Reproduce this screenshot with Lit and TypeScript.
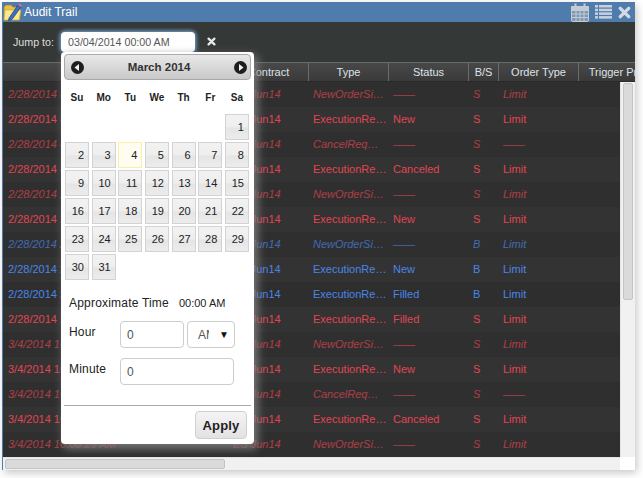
import { css, html, LitElement, svg } from "lit";
import { customElement } from "lit/decorators.js";

type Tone = "red" | "blue";
interface Row {
  date: string;
  type: string;
  status: string;
  side: string;
  order: string;
  tone: Tone;
  muted: boolean;
}

const DASH = "——";
const NEW = "NewOrderSingle";
const EXEC = "ExecutionReport";
const CANCEL = "CancelReq…";

function row(date: string, type: string, status: string, tone: Tone = "red", order = "Limit"): Row {
  return {
    date,
    type,
    status,
    order,
    tone,
    side: tone === "red" ? "S" : "B",
    muted: type !== EXEC,
  };
}

const ROWS: Row[] = [
  row("2/28/2014 8:12:04 PM", NEW, DASH),
  row("2/28/2014 8:12:04 PM", EXEC, "New"),
  row("2/28/2014 8:14:33 PM", CANCEL, DASH, "red", DASH),
  row("2/28/2014 8:14:33 PM", EXEC, "Canceled"),
  row("2/28/2014 2:20:41 PM", NEW, DASH),
  row("2/28/2014 2:20:41 PM", EXEC, "New"),
  row("2/28/2014 2:31:10 PM", NEW, DASH, "blue"),
  row("2/28/2014 2:31:10 PM", EXEC, "New", "blue"),
  row("2/28/2014 2:31:10 PM", EXEC, "Filled", "blue"),
  row("2/28/2014 2:31:10 PM", EXEC, "Filled"),
  row("3/4/2014 10:02:17 AM", NEW, DASH),
  row("3/4/2014 10:02:17 AM", EXEC, "New"),
  row("3/4/2014 10:05:52 AM", CANCEL, DASH, "red", DASH),
  row("3/4/2014 10:05:52 AM", EXEC, "Canceled"),
  row("3/4/2014 10:08:29 AM", NEW, DASH),
];

const WEEKDAYS = ["Su", "Mo", "Tu", "We", "Th", "Fr", "Sa"];
const HEADERS = ["", "Contract", "Type", "Status", "B/S", "Order Type", "Trigger Price"];

const folderIcon = svg`<svg class="logo" width="20" height="20" viewBox="0 0 20 20">
  <path d="M1 5 L3 3 H8 L10 5 H17 V18 H1 Z" fill="#e8c04a" stroke="#a5852c" stroke-width=".8"/>
  <path d="M2 8 H18 L16 18 H1 Z" fill="#fbe98a" stroke="#c9a63a" stroke-width=".6"/>
  <path d="M6 16 L15 3 L18 5 L9 17.5 L5.5 18.5 Z" fill="#3d6fc0" stroke="#1f3f7a" stroke-width=".7"/>
  <path d="M15 3 L16.2 1.4 L19 3.4 L18 5 Z" fill="#e86ca0"/>
</svg>`;

const calendarIcon = svg`<svg width="18" height="19" viewBox="0 0 18 19" fill="none" stroke="#c3ccd4">
  <rect x=".5" y="3.5" width="17" height="15" rx="1.5" stroke="#c3ccd4" fill="#7d98b5"/>
  <path d="M.5 7.5 H17.5 M.5 11 H17.5 M.5 14.5 H17.5 M5 7.5 V18 M9 7.5 V18 M13 7.5 V18"/>
  <path d="M.5 3.5 H17.5 V7 H.5 Z" fill="#c3ccd4"/>
  <path d="M4.5 .5 V5 M13.5 .5 V5" stroke-width="2"/>
</svg>`;

const listIcon = svg`<svg width="17" height="14" viewBox="0 0 17 14" fill="#c9d2da">
  <rect x="0" y="0" width="3" height="2.5"/><rect x="4" y="0" width="13" height="2.5"/>
  <rect x="0" y="3.7" width="3" height="2.5"/><rect x="4" y="3.7" width="13" height="2.5"/>
  <rect x="0" y="7.4" width="3" height="2.5"/><rect x="4" y="7.4" width="13" height="2.5"/>
  <rect x="0" y="11.1" width="3" height="2.5"/><rect x="4" y="11.1" width="13" height="2.5"/>
</svg>`;

const crossIcon = (size: number, color: string) => svg`<svg width=${size} height=${size} viewBox="0 0 14 14">
  <path d="M2.5 2.5 L11.5 11.5 M11.5 2.5 L2.5 11.5" stroke=${color} stroke-width="3.6" stroke-linecap="round"/>
</svg>`;

const arrowIcon = (points: string) => svg`<svg width="13" height="13" viewBox="0 0 13 13">
  <circle cx="6.5" cy="6.5" r="6.5" fill="#1e1e1e"/>
  <polygon points=${points} fill="#f2f2f2"/>
</svg>`;

@customElement("app-root")
export class AppRoot extends LitElement {
  static styles = css`
    :host {
      display: block;
      width: 643px;
      height: 478px;
      overflow: hidden;
      box-sizing: border-box;
      padding: 2px 8px 8px 2px;
      background: #fff;
      font-family: "Liberation Sans", Arial, sans-serif;
      font-size: 11px;
    }
    * {
      box-sizing: border-box;
    }
    .window {
      position: relative;
      display: flex;
      flex-direction: column;
      height: 100%;
      background: #f1f1f1;
      border-left: 1px solid #4f7cac;
      box-shadow: 2px 3px 8px rgba(0, 0, 0, 0.22);
    }
    .title {
      display: flex;
      align-items: center;
      flex: none;
      height: 20px;
      background: #4f7cac;
      color: #fff;
      font-size: 12px;
      padding-right: 4px;
    }
    .logo {
      margin: 0 1px 0 0;
      flex: none;
    }
    .title-name {
      flex: 1;
    }
    .title-tools {
      display: flex;
      align-items: center;
      gap: 6px;
    }
    .toolbar {
      display: flex;
      align-items: center;
      flex: none;
      height: 40px;
      background: #343836;
      color: #ddd;
      font-size: 10.7px;
      padding: 0 0 0 10px;
    }
    .jump-label {
      flex: none;
      width: 40px;
      white-space: nowrap;
    }
    .jump-input {
      flex: none;
      width: 134px;
      height: 20px;
      margin: 0 12px 0 8px;
      padding: 0 7px;
      display: flex;
      align-items: center;
      background: #fff;
      border-radius: 4px;
      color: #555;
      box-shadow: 0 0 4px 1px #7fb2e5;
    }
    .clear {
      display: flex;
      margin-bottom: 2px;
    }
    .grid {
      display: flex;
      flex-direction: column;
      flex: 1;
      min-height: 0;
    }
    .head,
    .cells {
      display: grid;
      grid-template-columns: 225px 80px 80px 80px 30px 80px 83px;
      width: 632px;
    }
    .head {
      flex: none;
      height: 20px;
      overflow: hidden;
      background: linear-gradient(#484848, #3a3a3a);
      border-top: 1px solid #6a6a6a;
      border-bottom: 1px solid #2a2a2a;
      color: #dde3e8;
    }
    .head div {
      display: flex;
      align-items: center;
      justify-content: center;
      white-space: nowrap;
      overflow: hidden;
      border-left: 1px solid #6c6c6c;
    }
    .head div:first-child {
      border-left: 0;
    }
    .body {
      display: flex;
      flex: 1;
      min-height: 0;
    }
    .rows {
      flex: 1;
      min-width: 0;
      overflow: hidden;
      background: #333;
    }
    .cells {
      height: 25px;
      align-items: center;
      background: #333;
      padding-bottom: 2px;
    }
    .cells:nth-child(odd) {
      background: #2e2e2e;
    }
    .cells div {
      padding: 0 0 0 5px;
      white-space: nowrap;
      overflow: hidden;
      text-overflow: ellipsis;
    }
    .red {
      color: #e24552;
    }
    .blue {
      color: #4a86e8;
    }
    .muted {
      font-style: italic;
      opacity: 0.68;
    }
    .vbar {
      flex: none;
      width: 15px;
      padding: 1px 2px;
      background: #f1f1f1;
      border-left: 1px solid #e4e4e4;
    }
    .vthumb {
      height: 217px;
      background: #dadada;
      border: 1px solid #c4c4c4;
      border-radius: 2px;
    }
    .hbar {
      display: flex;
      flex: none;
      height: 13px;
    }
    .htrack {
      flex: 1;
      padding: 1px 2px;
      background: #f1f1f1;
      border-top: 1px solid #e4e4e4;
    }
    .hthumb {
      width: 220px;
      height: 10px;
      background: #dadada;
      border: 1px solid #c4c4c4;
      border-radius: 2px;
    }
    .corner {
      flex: none;
      width: 15px;
      background: #fff;
    }
    .picker {
      position: absolute;
      left: 58px;
      top: 50px;
      width: 193px;
      height: 392px;
      display: flex;
      flex-direction: column;
      padding: 2px 3px;
      background: #fff;
      color: #222;
      border-radius: 4px;
      box-shadow: 3px 4px 8px 1px rgba(125, 125, 125, 0.9);
    }
    .month {
      display: flex;
      align-items: center;
      justify-content: space-between;
      flex: none;
      height: 26px;
      padding: 0 3px 0 6px;
      background: linear-gradient(#e8e8e8, #c9c9c9);
      border: 1px solid #a9a9a9;
      border-radius: 4px;
      color: #333;
      font-weight: bold;
      font-size: 11.5px;
    }
    .month svg {
      display: block;
    }
    .weekday {
      display: flex;
      align-items: center;
      justify-content: center;
      font-weight: bold;
      font-size: 10px;
      color: #222;
    }
    .weekdays {
      flex: none;
      height: 32px;
      display: grid;
      grid-template-columns: repeat(7, 24px);
      column-gap: 2.67px;
      padding: 3px 0 0 1px;
    }
    .days {
      display: grid;
      flex: none;
      grid-template-columns: repeat(7, 24px);
      grid-auto-rows: 26px;
      column-gap: 2.67px;
      row-gap: 2px;
      padding: 2px 0 0 1px;
    }
    .day {
      display: flex;
      align-items: center;
      justify-content: flex-end;
      padding-right: 4px;
      background: linear-gradient(#f2f2f2 0, #eeeeee 50%, #e5e5e5 54%, #ececec 100%);
      border: 1px solid #d3d3d3;
      color: #222;
      font-size: 11px;
    }
    .day.today {
      background: #fffdf2;
      border-color: #fbeea6;
    }
    .approx {
      display: flex;
      align-items: baseline;
      gap: 10px;
      flex: none;
      margin: 16px 0 0 5px;
      font-size: 12px;
      letter-spacing: 0.2px;
      color: #222;
    }
    .approx span + span {
      font-size: 11px;
      letter-spacing: 0;
    }
    .field {
      display: flex;
      flex: none;
      gap: 3px;
      margin: 11px 0 0 5px;
    }
    .field label {
      width: 48px;
      padding-top: 4px;
      font-size: 12px;
      letter-spacing: 0.2px;
      color: #222;
    }
    .field input,
    .ampm {
      height: 27px;
      padding: 0 6px;
      background: #fff;
      border: 1px solid #cdcdcd;
      border-radius: 4px;
      font: 12px "Liberation Sans", Arial, sans-serif;
      color: #555;
      outline: none;
    }
    .hour {
      width: 64px;
    }
    .minute {
      width: 114px;
    }
    .field.second {
      margin-top: 10px;
    }
    .ampm {
      display: flex;
      align-items: center;
      justify-content: space-between;
      width: 48px;
      padding: 0 5px 0 10px;
    }
    .ampm span {
      width: 11px;
      overflow: hidden;
    }
    .ampm i {
      font-style: normal;
      color: #111;
      font-size: 10px;
    }
    .footer {
      display: flex;
      justify-content: flex-end;
      flex: none;
      margin-top: 20px;
      padding: 5px 4px 0 0;
      border-top: 1px solid #aaa;
    }
    .apply {
      width: 52px;
      height: 28px;
      display: flex;
      align-items: center;
      justify-content: center;
      background: linear-gradient(#f4f4f4, #e2e2e2);
      border: 1px solid #d0d0d0;
      border-radius: 4px;
      font-weight: bold;
      font-size: 13px;
      letter-spacing: 0.2px;
      color: #222;
    }
  `;

  render() {
    const blanks = Array.from({ length: 6 });
    const days = Array.from({ length: 31 }, (_, i) => i + 1);
    return html`
      <div class="window">
        <div class="title">
          ${folderIcon}
          <span class="title-name">Audit Trail</span>
          <span class="title-tools">${calendarIcon}${listIcon}${crossIcon(13, "#d3dae1")}</span>
        </div>
        <div class="toolbar">
          <span class="jump-label">Jump to:</span>
          <div class="jump-input">03/04/2014 00:00 AM</div>
          <span class="clear">${crossIcon(9, "#e8e8e8")}</span>
        </div>
        <div class="grid">
          <div class="head">${HEADERS.map((h) => html`<div>${h}</div>`)}</div>
          <div class="body">
            <div class="rows">
              ${ROWS.map(
                (r) => html`
                  <div class="cells ${r.tone} ${r.muted ? "muted" : ""}">
                    <div>${r.date}</div>
                    <div>ES Jun14</div>
                    <div>${r.type}</div>
                    <div>${r.status}</div>
                    <div>${r.side}</div>
                    <div>${r.order}</div>
                    <div></div>
                  </div>
                `
              )}
            </div>
            <div class="vbar"><div class="vthumb"></div></div>
          </div>
          <div class="hbar">
            <div class="htrack"><div class="hthumb"></div></div>
            <div class="corner"></div>
          </div>
        </div>

        <div class="picker">
          <div class="month">
            ${arrowIcon("8,3 8,10 3.5,6.5")}
            <span>March 2014</span>
            ${arrowIcon("5,3 5,10 9.5,6.5")}
          </div>
          <div class="weekdays">
            ${WEEKDAYS.map((d) => html`<div class="weekday">${d}</div>`)}
          </div>
          <div class="days">
            ${blanks.map(() => html`<div></div>`)}
            ${days.map((d) => html`<div class="day ${d === 4 ? "today" : ""}">${d}</div>`)}
          </div>
          <div class="approx"><span>Approximate Time</span><span>00:00 AM</span></div>
          <div class="field">
            <label>Hour</label>
            <input class="hour" value="0" />
            <div class="ampm"><span>AM</span><i>▼</i></div>
          </div>
          <div class="field second">
            <label>Minute</label>
            <input class="minute" value="0" />
          </div>
          <div class="footer"><div class="apply">Apply</div></div>
        </div>
      </div>
    `;
  }
}
